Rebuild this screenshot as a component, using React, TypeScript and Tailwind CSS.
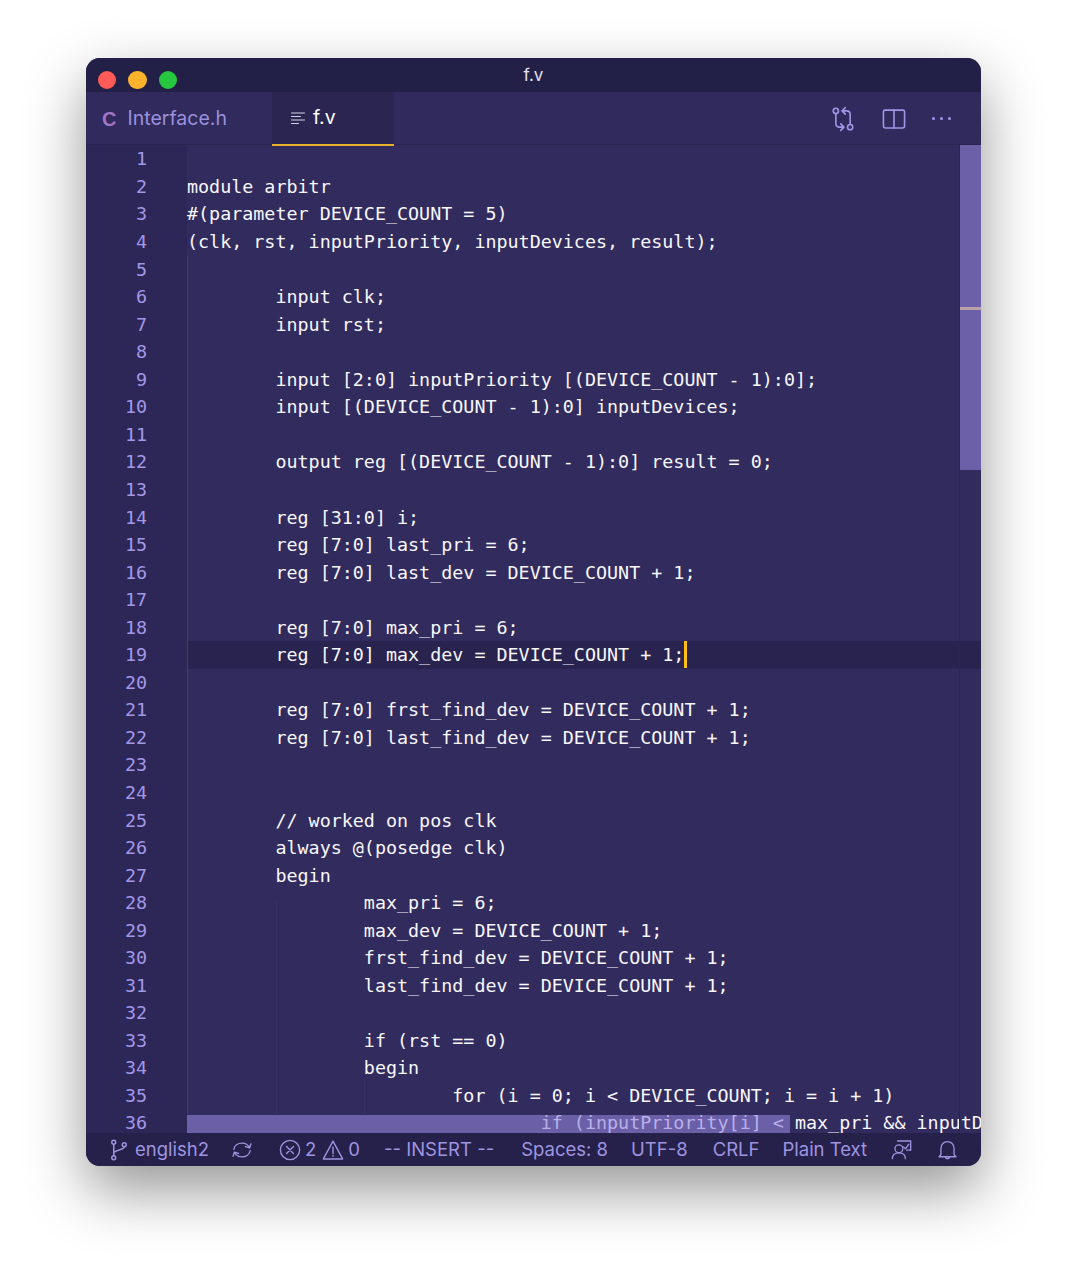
import type { ReactNode } from "react";

const codeLines = [
  "",
  "module arbitr",
  "#(parameter DEVICE_COUNT = 5)",
  "(clk, rst, inputPriority, inputDevices, result);",
  "",
  "        input clk;",
  "        input rst;",
  "",
  "        input [2:0] inputPriority [(DEVICE_COUNT - 1):0];",
  "        input [(DEVICE_COUNT - 1):0] inputDevices;",
  "",
  "        output reg [(DEVICE_COUNT - 1):0] result = 0;",
  "",
  "        reg [31:0] i;",
  "        reg [7:0] last_pri = 6;",
  "        reg [7:0] last_dev = DEVICE_COUNT + 1;",
  "",
  "        reg [7:0] max_pri = 6;",
  "        reg [7:0] max_dev = DEVICE_COUNT + 1;",
  "",
  "        reg [7:0] frst_find_dev = DEVICE_COUNT + 1;",
  "        reg [7:0] last_find_dev = DEVICE_COUNT + 1;",
  "",
  "",
  "        // worked on pos clk",
  "        always @(posedge clk)",
  "        begin",
  "                max_pri = 6;",
  "                max_dev = DEVICE_COUNT + 1;",
  "                frst_find_dev = DEVICE_COUNT + 1;",
  "                last_find_dev = DEVICE_COUNT + 1;",
  "",
  "                if (rst == 0)",
  "                begin",
  "                        for (i = 0; i < DEVICE_COUNT; i = i + 1)",
];

function Icon({ className, children }: { className: string; children: ReactNode }) {
  return (
    <svg viewBox="0 0 16 16" fill="none" stroke="currentColor" strokeWidth="1" strokeLinecap="round" strokeLinejoin="round" className={className}>
      {children}
    </svg>
  );
}

function CodeRow({ text, active }: { text: string; active: boolean }) {
  return (
    <div className={`h-[27.55px] whitespace-pre leading-[27.55px] ${active ? "bg-[#29244f]" : ""}`}>
      {text}
      {active && <span className="inline-block h-[27px] w-[3px] bg-[#fcbf14] align-top" />}
    </div>
  );
}

export default function App() {
  return (
    <div className="h-[1280px] bg-white pl-[86px] pt-[58px] font-['Inter',sans-serif]">
      <div className="flex h-[1108px] w-[895px] flex-col overflow-hidden rounded-[14px] bg-[#322b5e] shadow-[0_24px_60px_rgba(0,0,0,0.42)]">
        {/* title bar */}
        <div className="relative flex h-[34px] shrink-0 items-center gap-[12px] bg-[#232048] pl-[11.5px] pt-[10px]">
          <span className="h-[18.500px] w-[18.500px] rounded-full bg-[#fc5b57]" />
          <span className="h-[18.500px] w-[18.500px] rounded-full bg-[#fdb32b]" />
          <span className="h-[18.500px] w-[18.500px] rounded-full bg-[#27c840]" />
          <span className="absolute left-0 right-0 top-[6px] text-center text-[17px] leading-[22px] text-[#e4e1f2]">f.v</span>
        </div>

        {/* tabs */}
        <div className="relative z-10 flex h-[53px] shrink-0 border-b border-[#28234f] bg-[#312a5c] text-[19.500px]">
          <div className="flex w-[186px] items-center pl-[16px] pt-[1px] text-[#9b90dd]">
            <span className="mr-[11px] font-['Liberation_Sans',sans-serif] text-[20px] font-bold text-[#a074c4]">C</span>
            Interface.h
          </div>
          <div className="flex h-[54px] w-[122px] shrink-0 items-center self-start border-b-2 border-[#e7b127] bg-[#2a2651] pl-[18px] text-white">
            <Icon className="mr-[7px] h-[16px] w-[16px] text-[#d5d1ea]">
              <path d="M1.500 3h13M1.500 6.500h9M1.500 10h13M1.500 13.500h7" />
            </Icon>
            f.v
          </div>
          <div className="ml-auto flex items-center gap-[25px] pr-[30px] pt-[1px] text-[#a095e6]">
            <Icon className="h-[26px] w-[26px]">
              <circle cx="3.600" cy="3" r="1.600" />
              <circle cx="12.400" cy="13" r="1.600" />
              <path d="M3.600 4.600v6.200c0 1.200.8 2.200 2.200 2.200h2.600M6.600 11l2 2-2 2M12.400 11.400V5.200C12.400 4 11.600 3 10.200 3H7.600M9.400 1l-2 2 2 2" />
            </Icon>
            <Icon className="h-[26px] w-[26px]">
              <rect x="1.500" y="2.500" width="13" height="11" rx="1" />
              <path d="M8 2.500v11" />
            </Icon>
            <span className="flex w-[19px] justify-between">
              <span className="h-[3px] w-[3px] rounded-full bg-[#a095e6]" />
              <span className="h-[3px] w-[3px] rounded-full bg-[#a095e6]" />
              <span className="h-[3px] w-[3px] rounded-full bg-[#a095e6]" />
            </span>
          </div>
        </div>

        {/* editor */}
        <div className="relative flex min-h-0 flex-1 overflow-hidden pt-[0.4px] font-['DejaVu_Sans_Mono',monospace] text-[18.36px]">
          <div className="w-[101px] shrink-0 bg-[#2d2757] pr-[40px] text-right text-[#a397e8]">
            {codeLines.concat("").map((_, i) => (
              <div key={i} className={`h-[27.55px] leading-[27.55px] ${i === 35 ? "-translate-y-px" : ""}`}>
                {i + 1}
              </div>
            ))}
          </div>

          <div className="min-w-0 flex-1 text-[#f8f7fc]">
            {codeLines.map((line, i) => (
              <CodeRow key={i} text={line} active={i === 18} />
            ))}
            <div className="relative h-[27.55px] whitespace-pre leading-[25.55px]">
              <div className="absolute left-0 top-[5px] h-[24px] w-[603px] bg-[#6b5fa8]" />
              <span className="relative text-[#b9b0ea]">{"                                if (inputPriority[i] < "}</span>
              <span className="relative">max_pri &amp;&amp; inputD</span>
            </div>
          </div>

          {/* indent guides */}
          <span className="absolute bottom-[19px] left-[101px] top-[111px] w-px bg-[#443c78]" />
          <span className="absolute bottom-[19px] left-[190px] top-[755px] w-px bg-[#383166]" />
          <span className="absolute bottom-[19px] left-[278px] top-[935px] w-px bg-[#383166]" />

          {/* scrollbar */}
          <span className="absolute bottom-0 right-[21px] top-0 w-px bg-[#2b2553]" />
          <div className="absolute right-0 top-0 h-[325px] w-[21px] bg-[#6c60a8]">
            <div className="mt-[162px] h-[3px] bg-[#b9a3a8]" />
          </div>
        </div>

        {/* status bar */}
        <div className="flex h-[33px] shrink-0 items-center bg-[#25214a] pl-[21px] text-[18.500px] text-[#9f94e0]">
          <Icon className="mr-[4px] h-[24px] w-[24px]">
            <circle cx="4.500" cy="2.800" r="1.300" />
            <circle cx="4.500" cy="13.200" r="1.300" />
            <circle cx="11.500" cy="4.500" r="1.300" />
            <path d="M4.500 4.100v7.800M4.500 10c0-2 7-1.800 7-4.200" />
          </Icon>
          <span>english2</span>
          <Icon className="ml-[22px] h-[22px] w-[22px]">
            <path d="M2 7.500C2.500 4.800 5 3 8 3c2.400 0 4.400 1.200 5.400 3.200M14 8.500c-.5 2.700-3 4.500-6 4.500-2.400 0-4.400-1.200-5.400-3.200M14.500 3.500L13.500 6.500 10.500 5.500M1.500 12.500L2.500 9.500 5.500 10.500" />
          </Icon>
          <Icon className="ml-[26px] h-[22px] w-[22px]">
            <circle cx="8" cy="8" r="7" />
            <path d="M5.500 5.500l5 5M10.500 5.500l-5 5" />
          </Icon>
          <span className="ml-[4px]">2</span>
          <Icon className="ml-[6px] h-[22px] w-[22px]">
            <path d="M8 1.500l7 13H1zM8 6v4.500M8 12v.5" />
          </Icon>
          <span className="ml-[4px]">0</span>
          <span className="ml-[24px]">-- INSERT --</span>
          <span className="ml-[27px]">Spaces: 8</span>
          <span className="ml-[23px]">UTF-8</span>
          <span className="ml-[25px]">CRLF</span>
          <span className="ml-[23px]">Plain Text</span>
          <Icon className="ml-[24px] h-[21px] w-[21px]">
            <circle cx="6" cy="7.500" r="3" />
            <path d="M1 15c0-3 2-4.500 5-4.500s5 1.500 5 4.500M5 1.500h10v7h-3M9.500 6l1.500 1.500L13.500 4" />
          </Icon>
          <Icon className="ml-[25px] h-[21px] w-[21px]">
            <path d="M3 12V7a5 5 0 0 1 10 0v5l1.500 1.500h-13zM6.500 13.500a1.500 1.500 0 0 0 3 0" />
          </Icon>
        </div>
      </div>
    </div>
  );
}
